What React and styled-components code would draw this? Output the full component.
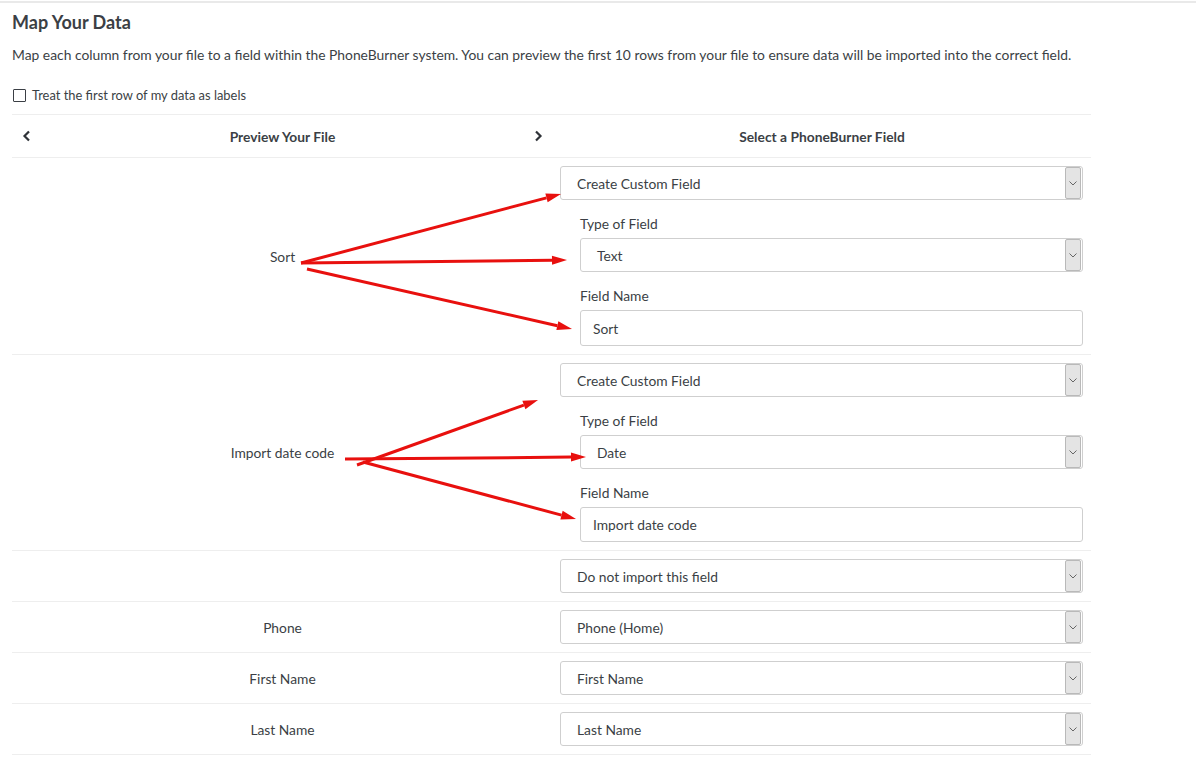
import styled, { createGlobalStyle } from "styled-components";

const GlobalStyle = createGlobalStyle`
  * { box-sizing: border-box; }
  body {
    margin: 0;
    background: #fff;
    font-family: Lato, "Open Sans", sans-serif;
    color: #3b3f45;
  }
`;

const Page = styled.div`
  position: relative;
  width: 1196px;
  min-height: 759px;
  margin-top: 1px;
  border-top: 2px solid #e9e9e9;
  padding: 0 105px 0 12px;
`;

const Title = styled.h2`
  margin: 0;
  padding-top: 9px;
  font-size: 18px;
  line-height: 20px;
  font-weight: 700;
  color: #3b3f45;
`;

const Intro = styled.p`
  margin: 14px 0 0;
  font-size: 13.85px;
  line-height: 18px;
`;

const CheckRow = styled.label`
  display: flex;
  align-items: center;
  gap: 6px;
  margin-top: 23px;
  margin-bottom: 11px;
  font-size: 12.9px;
  line-height: 16px;
`;

const Box = styled.span`
  width: 13px;
  height: 13px;
  border: 1px solid #3b3f45;
  border-radius: 1px;
  margin-left: 1px;
  background: #fff;
`;

const Table = styled.div`
  border-top: 1px solid #eeeeee;
`;

const Row = styled.div`
  display: grid;
  grid-template-columns: 541px 1fr;
  align-items: center;
  border-bottom: 1px solid #eeeeee;
`;

const HeaderRow = styled(Row)`
  height: 43px;
`;

const HeadCell = styled.div`
  display: grid;
  grid-template-columns: 30px 1fr 30px;
  align-items: center;
  height: 100%;
`;

const HeadTitle = styled.div`
  text-align: center;
  font-size: 13.8px;
  font-weight: 700;
`;

const Pager = styled.button`
  display: flex;
  align-items: center;
  justify-content: center;
  padding: 0;
  border: 0;
  background: none;
  color: #2f3338;
  cursor: pointer;
`;

const SourceCell = styled.div`
  text-align: center;
  font-size: 13.8px;
`;

const TargetCell = styled.div`
  padding: 8px 8px 8px 7px;
`;

const SelectBox = styled.div`
  display: flex;
  align-items: stretch;
  height: 34px;
  border: 1px solid #cfcfcf;
  border-radius: 3px;
  background: #fff;
  font-size: 13.8px;
  padding-right: 1px;
`;

const SelectText = styled.span`
  flex: 1;
  display: flex;
  align-items: center;
  padding-left: 16px;
`;

const ArrowBtn = styled.span`
  width: 16px;
  display: flex;
  align-items: center;
  justify-content: center;
  background: #e4e4e4;
  border: 1px solid #b9b9b9;
  border-radius: 2px;
`;

const Input = styled.div`
  display: flex;
  align-items: center;
  height: ${(p) => (p.$tall ? "36px" : "35px")};
  padding-left: 12px;
  border: 1px solid #cfcfcf;
  border-radius: 3px;
  font-size: 13.8px;
`;

const SubFields = styled.div`
  margin-left: 20px;
`;

const FieldLabel = styled.div`
  margin: 15px 0 5px;
  font-size: 13.8px;
  line-height: 18px;
`;

const Overlay = styled.svg`
  position: absolute;
  left: 0;
  top: -3px;
  pointer-events: none;
`;

const Chevron = ({ dir }) => (
  <svg width="10" height="12" viewBox="0 0 10 12">
    <path
      d={dir === "left" ? "M7 1.5 L2.5 6 L7 10.5" : "M3 1.5 L7.5 6 L3 10.5"}
      fill="none"
      stroke="currentColor"
      strokeWidth="2.2"
    />
  </svg>
);

const Select = ({ value }) => (
  <SelectBox>
    <SelectText>{value}</SelectText>
    <ArrowBtn>
      <svg width="8" height="5" viewBox="0 0 8 5">
        <path d="M0.5 0.5 L4 4 L7.5 0.5" fill="none" stroke="#666" strokeWidth="1" />
      </svg>
    </ArrowBtn>
  </SelectBox>
);

const rows = [
  { source: "Sort", custom: true, type: "Text", name: "Sort", tall: true },
  { source: "Import date code", custom: true, type: "Date", name: "Import date code" },
  { source: "", target: "Do not import this field" },
  { source: "Phone", target: "Phone (Home)" },
  { source: "First Name", target: "First Name" },
  { source: "Last Name", target: "Last Name" },
];

// annotation arrows, page coordinates
const arrows = [
  [301, 263, 561, 194],
  [301, 263, 567, 260],
  [307, 269, 572, 329],
  [357, 465, 538, 400],
  [345, 459, 586, 457],
  [363, 462, 576, 519],
];

function Arrow({ x1, y1, x2, y2 }) {
  const a = Math.atan2(y2 - y1, x2 - x1);
  const len = 15;
  const w = 4.5;
  const bx = x2 - len * Math.cos(a);
  const by = y2 - len * Math.sin(a);
  const px = -Math.sin(a) * w;
  const py = Math.cos(a) * w;
  return (
    <g>
      <line x1={x1} y1={y1} x2={bx} y2={by} stroke="#e8100e" strokeWidth="3" />
      <polygon
        points={`${x2},${y2} ${bx + px},${by + py} ${bx - px},${by - py}`}
        fill="#e8100e"
      />
    </g>
  );
}

export default function App() {
  return (
    <>
      <GlobalStyle />
      <Page>
        <Title>Map Your Data</Title>
        <Intro>
          Map each column from your file to a field within the PhoneBurner system. You can
          preview the first 10 rows from your file to ensure data will be imported into the
          correct field.
        </Intro>
        <CheckRow>
          <Box />
          Treat the first row of my data as labels
        </CheckRow>
        <Table>
          <HeaderRow>
            <HeadCell>
              <Pager>
                <Chevron dir="left" />
              </Pager>
              <HeadTitle>Preview Your File</HeadTitle>
              <Pager>
                <Chevron dir="right" />
              </Pager>
            </HeadCell>
            <HeadTitle>Select a PhoneBurner Field</HeadTitle>
          </HeaderRow>
          {rows.map((r, i) => (
            <Row key={i}>
              <SourceCell>{r.source}</SourceCell>
              <TargetCell>
                {r.custom ? (
                  <>
                    <Select value="Create Custom Field" />
                    <SubFields>
                      <FieldLabel>Type of Field</FieldLabel>
                      <Select value={r.type} />
                      <FieldLabel>Field Name</FieldLabel>
                      <Input $tall={r.tall}>{r.name}</Input>
                    </SubFields>
                  </>
                ) : (
                  <Select value={r.target} />
                )}
              </TargetCell>
            </Row>
          ))}
        </Table>
        <Overlay width="1196" height="762">
          {arrows.map(([x1, y1, x2, y2], i) => (
            <Arrow key={i} x1={x1} y1={y1} x2={x2} y2={y2} />
          ))}
        </Overlay>
      </Page>
    </>
  );
}
